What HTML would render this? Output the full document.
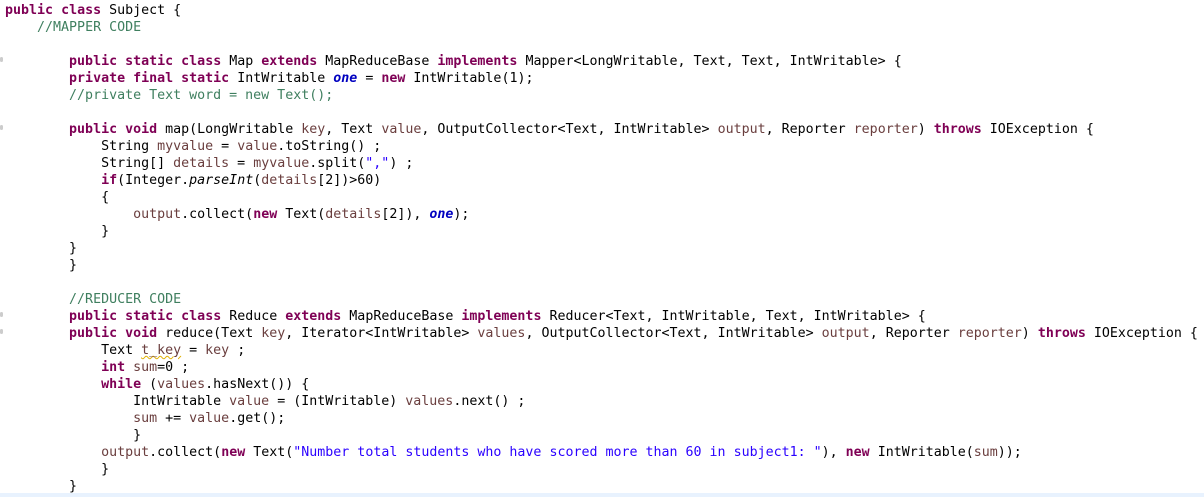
<!DOCTYPE html>
<html><head><meta charset="utf-8"><style>
html,body{margin:0;padding:0;background:#fff;width:1204px;height:497px;overflow:hidden;position:relative}
pre{margin:0;position:absolute;left:5px;top:2px;font-family:"DejaVu Sans Mono","Liberation Mono",monospace;font-size:13.3px;line-height:17px;color:#000;tab-size:4;-moz-tab-size:4}
.k{color:#7f0055;font-weight:bold}
.c{color:#3f7f5f}
.v{color:#6a3e3e}
.f{color:#0000c0;font-weight:bold;font-style:italic}
.s{color:#2a00ff}
.i{font-style:italic}
.u{text-decoration:underline wavy #e0b000;text-decoration-thickness:1px}
.hl{position:absolute;left:0;top:493px;width:1204px;height:4px;background:#e8f2fe}
.dot{position:absolute;left:0;width:3px;height:5px;border-radius:3px;background:#ccc}
</style></head><body>
<div class="hl"></div>
<div class="dot" style="top:57px"></div>
<div class="dot" style="top:125px"></div>
<div class="dot" style="top:312px"></div>
<div class="dot" style="top:329px"></div>
<pre><span class="k">public</span> <span class="k">class</span> Subject {
    <span class="c">//MAPPER CODE</span>

        <span class="k">public</span> <span class="k">static</span> <span class="k">class</span> Map <span class="k">extends</span> MapReduceBase <span class="k">implements</span> Mapper&lt;LongWritable, Text, Text, IntWritable&gt; {
        <span class="k">private</span> <span class="k">final</span> <span class="k">static</span> IntWritable <span class="f">one</span> = <span class="k">new</span> IntWritable(1);
        <span class="c">//private Text word = new Text();</span>

        <span class="k">public</span> <span class="k">void</span> map(LongWritable <span class="v">key</span>, Text <span class="v">value</span>, OutputCollector&lt;Text, IntWritable&gt; <span class="v">output</span>, Reporter <span class="v">reporter</span>) <span class="k">throws</span> IOException {
            String <span class="v">myvalue</span> = <span class="v">value</span>.toString() ;
            String[] <span class="v">details</span> = <span class="v">myvalue</span>.split(<span class="s">","</span>) ;
            <span class="k">if</span>(Integer.<span class="i">parseInt</span>(<span class="v">details</span>[2])&gt;60)
            {
                <span class="v">output</span>.collect(<span class="k">new</span> Text(<span class="v">details</span>[2]), <span class="f">one</span>);
            }
        }
        }

        <span class="c">//REDUCER CODE</span>
        <span class="k">public</span> <span class="k">static</span> <span class="k">class</span> Reduce <span class="k">extends</span> MapReduceBase <span class="k">implements</span> Reducer&lt;Text, IntWritable, Text, IntWritable&gt; {
        <span class="k">public</span> <span class="k">void</span> reduce(Text <span class="v">key</span>, Iterator&lt;IntWritable&gt; <span class="v">values</span>, OutputCollector&lt;Text, IntWritable&gt; <span class="v">output</span>, Reporter <span class="v">reporter</span>) <span class="k">throws</span> IOException {
            Text <span class="v u">t_key</span> = <span class="v">key</span> ;
            <span class="k">int</span> <span class="v">sum</span>=0 ;
            <span class="k">while</span> (<span class="v">values</span>.hasNext()) {
                IntWritable <span class="v">value</span> = (IntWritable) <span class="v">values</span>.next() ;
                <span class="v">sum</span> += <span class="v">value</span>.get();
                }
            <span class="v">output</span>.collect(<span class="k">new</span> Text(<span class="s">"Number total students who have scored more than 60 in subject1: "</span>), <span class="k">new</span> IntWritable(<span class="v">sum</span>));
            }
        }</pre>
</body></html>
